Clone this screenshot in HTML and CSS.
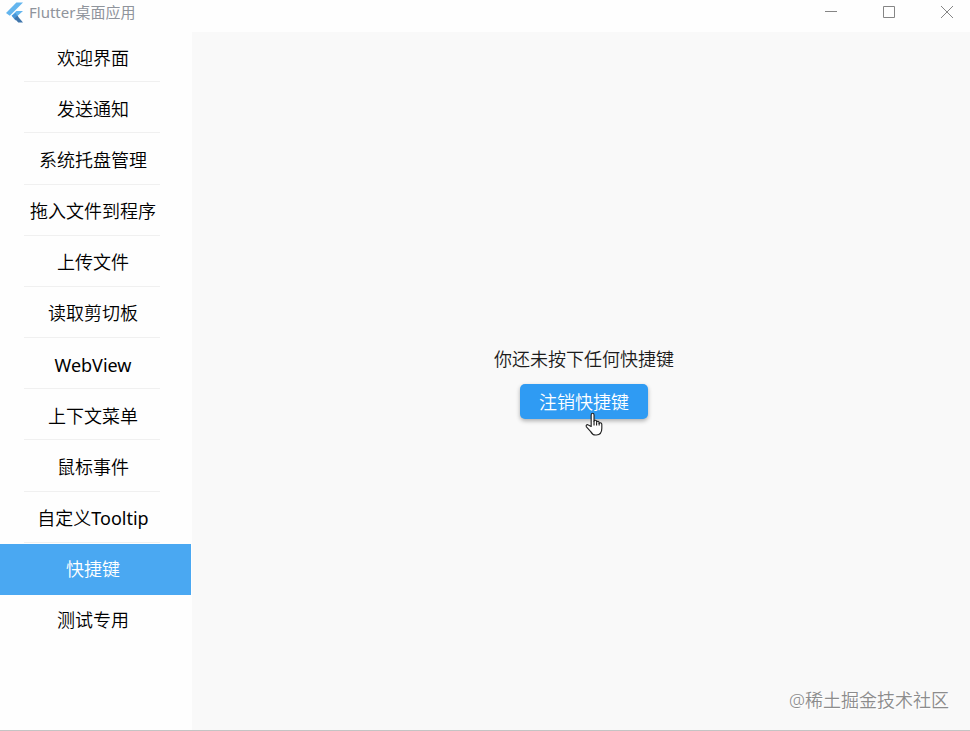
FILE: index.html
```html
<!DOCTYPE html>
<html lang="zh-CN">
<head>
<meta charset="utf-8">
<title>Flutter桌面应用</title>
<link rel="stylesheet" href="styles.css">
</head>
<body>
<div class="window">
  <header class="titlebar">
    <svg class="logo" viewBox="0 0 18 22" aria-hidden="true">
      <path fill="#63b5ee" d="M11 1h7L4 15l-4-3z"/>
      <path fill="#63b5ee" d="M11 10h7l-8 7-4-2z"/>
      <path fill="#4a96d6" d="M6 15l4-3 3 4-3 4z"/>
      <path fill="#3f75ab" d="M9 18l3-3 6 7h-5z"/>
    </svg>
    <h1 class="title">Flutter桌面应用</h1>
    <div class="controls">
      <button class="control" type="button" aria-label="最小化"><svg viewBox="0 0 14 14"><path d="M1 6.5h12"/></svg></button>
      <button class="control" type="button" aria-label="最大化"><svg viewBox="0 0 14 14"><path d="M1.500 1.500h11v11h-11z"/></svg></button>
      <button class="control" type="button" aria-label="关闭"><svg viewBox="0 0 14 14"><path d="M1 1l12 12M13 1L1 13"/></svg></button>
    </div>
  </header>
  <div class="body">
    <nav class="sidebar">
      <a class="item" href="#">欢迎界面</a>
      <a class="item" href="#">发送通知</a>
      <a class="item" href="#">系统托盘管理</a>
      <a class="item" href="#">拖入文件到程序</a>
      <a class="item" href="#">上传文件</a>
      <a class="item" href="#">读取剪切板</a>
      <a class="item latin" href="#">WebView</a>
      <a class="item" href="#">上下文菜单</a>
      <a class="item" href="#">鼠标事件</a>
      <a class="item" href="#"><span>自定义<span class="latin">Tooltip</span></span></a>
      <a class="item active" href="#" aria-current="page">快捷键</a>
      <a class="item" href="#">测试专用</a>
    </nav>
    <main class="content">
      <p class="message">你还未按下任何快捷键</p>
      <div class="action">
        <button class="primary" type="button">注销快捷键</button>
        <svg class="pointer" viewBox="0 0 20 26" aria-hidden="true">
          <path d="M6.500 15V3c0-2.400 3-2.400 3 0v6.500c.3-1.500 2.700-1.300 2.700.3v.7c.5-1.300 2.700-1 2.700.7v.7c.6-1.200 2.800-.8 2.800 1V17c0 4-2 7-5.700 7H11c-2.500 0-4-1.500-5-3.500L1.500 15.500c-1-1.700.7-3 2-2z"/>
          <path d="M9.500 9v5M12.200 10.500v3.500M14.900 11.500V14"/>
        </svg>
      </div>
      <p class="watermark">@稀土掘金技术社区</p>
    </main>
  </div>
</div>
</body>
</html>
```
FILE: styles.css
```css
* {
  box-sizing: border-box;
}

body {
  margin: 0;
  font-family: "Noto Sans", "Noto Sans CJK SC", sans-serif;
  font-size: 18px;
  font-weight: 350;
  line-height: 24px;
  color: #000;
  background: #fefefe;
}

p,
h1 {
  margin: 0;
}

button {
  border: 0;
  font: inherit;
}

.latin {
  font-weight: 400;
}

.window {
  display: flex;
  flex-direction: column;
  min-height: 100vh;
  border-bottom: 1px solid #c4c4c4;
}

.titlebar {
  display: flex;
  height: 32px;
  padding-left: 6px;
}

.logo {
  width: 17px;
  height: 22px;
  margin-top: 1px;
}

.title {
  margin-left: 6px;
  font-size: 15px;
  font-weight: 400;
  line-height: 24px;
  color: #8f949c;
}

.controls {
  display: flex;
  margin-left: auto;
  margin-right: -6px;
}

.control {
  display: flex;
  justify-content: center;
  width: 58px;
  padding: 5px 0 0;
  background: none;
}

.control svg {
  width: 14px;
  height: 14px;
  fill: none;
  stroke: #858585;
  stroke-width: 1;
}

.body {
  display: flex;
  flex: 1;
}

.sidebar {
  display: grid;
  grid-template-rows: repeat(12, 1fr);
  align-self: flex-start;
  width: 192px;
  height: 614px;
  border-right: 1px solid #fefefe;
}

.item {
  position: relative;
  display: flex;
  align-items: center;
  justify-content: center;
  padding-right: 5px;
  color: #000;
  text-decoration: none;
}

.item:not(.active, :last-child)::after {
  content: "";
  position: absolute;
  right: 31px;
  bottom: 1px;
  left: 24px;
  height: 1px;
  background: #f0f0f0;
}

.active {
  color: #fff;
  background: #4aa8f2;
}

.content {
  position: relative;
  display: flex;
  flex: 1;
  flex-direction: column;
  align-items: center;
  justify-content: center;
  gap: 13px;
  padding-top: 4px;
  padding-left: 6px;
  background: #f9f9f9;
}

.message {
  color: #1c1c1c;
}

.action {
  position: relative;
}

.primary {
  display: block;
  height: 35px;
  padding: 0 19px;
  border-radius: 5px;
  color: #fff;
  background: #2f9bf3;
  box-shadow: 0 2px 4px rgba(0, 0, 0, 0.3);
}

.pointer {
  position: absolute;
  top: 28px;
  left: 65px;
  width: 19px;
  height: 25px;
  fill: #fff;
  stroke: #222;
  stroke-width: 1.2;
  stroke-linejoin: round;
}

.watermark {
  position: absolute;
  right: 21px;
  bottom: 18px;
  color: #8c8c8c;
  text-shadow: 1px 1px 0 #fff;
}
```
